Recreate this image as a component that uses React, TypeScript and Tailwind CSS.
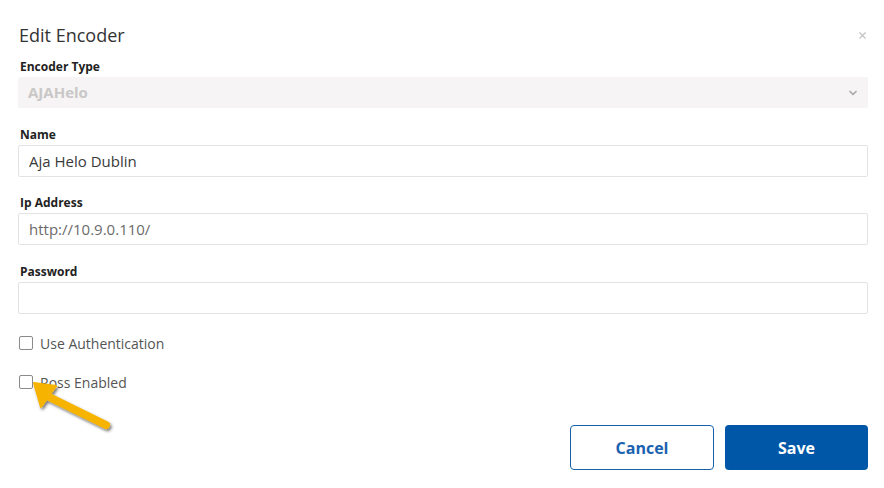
import { ChevronDown, X } from "lucide-react";

const fieldInput =
  "w-full h-[32px] px-[10px] border border-[#e3e3e3] rounded-[2px] bg-white text-[15px] focus:outline-none";

export default function App() {
  return (
    <main
      className="relative w-[884px] h-[488px] bg-white overflow-hidden"
      style={{ fontFamily: '"Open Sans", "Liberation Sans", sans-serif' }}
    >
      <div className="pl-[18px] pr-[16px] pt-[22px]">
        {/* Header */}
        <section className="flex items-center justify-between h-[26px]">
          <h1 className="text-[18px] leading-[26px] text-[#333] pl-px">Edit Encoder</h1>
          <button className="text-[#c2c2c2]">
            <X size={11} strokeWidth={2.5} />
          </button>
        </section>

        {/* Form */}
        <form className="mt-[11px]">
          {/* Encoder Type */}
          <div>
            <label className="block text-[12px] leading-[16px] font-bold text-[#222] pl-[2px]">
              Encoder Type
            </label>
            <div className="mt-[2px] h-[31px] flex items-center justify-between bg-[#f6f4f4] px-[10px] rounded-[2px]">
              <span className="text-[15px] font-bold text-[#c9c7c7]">AJAHelo</span>
              <ChevronDown size={12} strokeWidth={3.5} className="text-[#aaa] -mr-[1px]" />
            </div>
          </div>

          {/* Name */}
          <div className="mt-[19px]">
            <label className="block text-[12px] leading-[16px] font-bold text-[#222] pl-[2px]">
              Name
            </label>
            <input className={`mt-[2px] text-[#3a3a3a] ${fieldInput}`} defaultValue="Aja Helo Dublin" />
          </div>

          {/* Ip Address */}
          <div className="mt-[18px]">
            <label className="block text-[12px] leading-[16px] font-bold text-[#222] pl-[2px]">
              Ip Address
            </label>
            <input
              className={`mt-[2px] text-[#6b6b6b] ${fieldInput}`}
              defaultValue="http://10.9.0.110/"
            />
          </div>

          {/* Password */}
          <div className="mt-[19px]">
            <label className="block text-[12px] leading-[16px] font-bold text-[#222] pl-[2px]">
              Password
            </label>
            <input type="password" className={`mt-[2px] ${fieldInput}`} />
          </div>

          {/* Checkboxes */}
          <div className="mt-[21px] flex items-center h-[16px] pl-px">
            <span className="w-[14px] h-[14px] border-[1.5px] border-[#8a8a8a] rounded-[2px]" />
            <span className="ml-[7px] text-[14px] text-[#555]">Use Authentication</span>
          </div>
          <div className="mt-[23px] flex items-center h-[16px] pl-px">
            <span className="w-[14px] h-[14px] border-[1.5px] border-[#8a8a8a] rounded-[2px]" />
            <span className="ml-[7px] text-[14px] text-[#555]">Ross Enabled</span>
          </div>

          {/* Buttons */}
          <div className="mt-[35px] flex justify-end gap-[11px]">
            <button
              type="button"
              className="w-[144px] h-[45px] border-[1.5px] border-[#1760ab] rounded-[4px] text-[16px] font-bold text-[#1a62b0] bg-white"
            >
              Cancel
            </button>
            <button
              type="submit"
              className="w-[143px] h-[45px] rounded-[4px] text-[16px] font-bold text-white bg-[#0057a8]"
            >
              Save
            </button>
          </div>
        </form>
      </div>

      {/* annotation arrow */}
      <svg
        className="absolute left-0 top-0 pointer-events-none"
        width="884"
        height="488"
        viewBox="0 0 884 488"
      >
        <defs>
          <filter id="sh" x="-20%" y="-20%" width="140%" height="140%">
            <feDropShadow dx="1.5" dy="2" stdDeviation="1.5" floodColor="#000" floodOpacity="0.55" />
          </filter>
        </defs>
        <g filter="url(#sh)" fill="#f6b300" stroke="#f6b300">
          <line x1="47" y1="396" x2="106" y2="425" strokeWidth="8" strokeLinecap="round" />
          <polygon points="34,383 56,386 41,407" strokeWidth="2" strokeLinejoin="round" />
        </g>
      </svg>
    </main>
  );
}
